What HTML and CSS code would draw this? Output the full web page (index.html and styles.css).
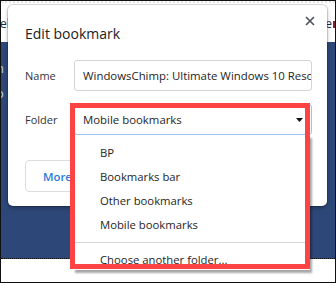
FILE: index.html
```html
<!DOCTYPE html>
<html>
<head>
<meta charset="utf-8">
<title>Edit bookmark</title>
<link rel="stylesheet" href="styles.css">
</head>
<body>
<div class="frame">
  <div class="page">
    <div class="page-top">
      <span class="frag-l">el</span>
      <span class="frag-r">e<i class="mark"></i></span>
    </div>
    <div class="page-band">
      <span class="glyph">n</span>
      <span class="glyph">o</span>
    </div>
    <div class="page-bottom"></div>
  </div>

  <section class="dialog">
    <header class="dlg-head">
      <h1 class="dlg-title">Edit bookmark</h1>
      <button class="close" aria-label="Close">
        <svg width="10" height="10" viewBox="0 0 10 10"><path d="M1 1L9 9M9 1L1 9" stroke="#4b4f5c" stroke-width="1.6" fill="none"/></svg>
      </button>
    </header>
    <div class="form">
      <span class="label">Name</span>
      <div class="field input">WindowsChimp: Ultimate Windows 10 Resources</div>
      <span class="label">Folder</span>
      <div class="field select">
        <span>Mobile bookmarks</span>
        <svg class="arrow" width="7" height="4" viewBox="0 0 7 4"><path d="M0 0H7L3.5 4Z" fill="#111"/></svg>
      </div>
    </div>
    <div class="actions">
      <button class="btn-more">More…</button>
    </div>
  </section>

  <ul class="popup">
    <li>BP</li>
    <li>Bookmarks bar</li>
    <li>Other bookmarks</li>
    <li>Mobile bookmarks</li>
    <li class="sep"></li>
    <li>Choose another folder...</li>
  </ul>

  <div class="annot"></div>
</div>
</body>
</html>
```

FILE: styles.css
```css
* { box-sizing: border-box; margin: 0; padding: 0; }
html, body { width: 336px; height: 283px; overflow: hidden; background: #fff; }
body { font-family: "Open Sans", "Noto Sans", sans-serif; color: #222; }

.frame {
  position: relative;
  width: 336px;
  height: 283px;
  border: 1px solid #111;
  overflow: hidden;
}

/* page behind the dialog */
.page { display: flex; flex-direction: column; height: 100%; }
.page-top {
  height: 41px;
  flex: 0 0 41px;
  display: flex;
  justify-content: space-between;
  align-items: flex-start;
  padding-top: 14px;
  border-top: 2px dotted #e6e6e6;
  font-size: 12px;
  line-height: 14px;
  color: #1d2c48;
}
.frag-l { margin-left: -1px; }
.frag-r { display: flex; align-items: center; margin-right: -1px; }
.mark { display: inline-block; width: 3px; height: 7px; background: #7a2436; margin-left: 1px; }
.page-band {
  flex: 0 0 217px;
  background: #2d4878;
  border-bottom: 1px dotted #111;
  display: flex;
  flex-direction: column;
  padding-top: 14px;
  font-size: 13px;
  line-height: 25px;
  color: #c6d1e4;
}
.glyph { margin-left: -5px; }
.page-bottom { flex: 1; background: #fff; }

/* dialog */
.dialog {
  position: absolute;
  left: 7px;
  top: 4px;
  width: 319px;
  height: 201px;
  background: #fff;
  border-radius: 5px;
  box-shadow: 0 0 0 1px rgba(0,0,0,0.12), 0 2px 4px rgba(0,0,0,0.3);
  padding: 11px 15px 14px 17px;
  display: flex;
  flex-direction: column;
}
.dlg-head {
  display: flex;
  justify-content: space-between;
  align-items: flex-start;
  height: 28px;
}
.dlg-title {
  margin-top: 8px;
  font-size: 14px;
  line-height: 20px;
  font-weight: 400;
  color: #202124;
}
.close {
  width: 10px;
  height: 10px;
  border: 0;
  background: none;
  margin-right: -3px;
  display: flex;
}

.form {
  margin-top: 16px;
  display: grid;
  grid-template-columns: 49px 238px;
  grid-auto-rows: 31px;
  row-gap: 13px;
  align-items: center;
}
.label { font-size: 11px; color: #333; }
.field {
  height: 31px;
  border: 1px solid #d4d4d4;
  border-radius: 3px;
  font-size: 11.4px;
  color: #1e1e1e;
  padding: 0 8px;
  display: flex;
  align-items: center;
  white-space: nowrap;
  overflow: hidden;
}
.select {
  border-color: #9fc2ee;
  justify-content: space-between;
  padding-right: 8px;
}

.actions { margin-top: 25px; display: flex; }
.btn-more {
  height: 32px;
  padding: 0 17px;
  border: 1px solid #dadce0;
  border-radius: 4px;
  background: #fff;
  font-family: "Open Sans", "Noto Sans", sans-serif;
  font-size: 11.4px;
  font-weight: 600;
  color: #2a7ad8;
}

/* native select popup */
.popup {
  position: absolute;
  left: 72px;
  top: 134px;
  width: 237px;
  height: 135px;
  background: #fff;
  box-shadow: 2px 3px 2px rgba(0,0,0,0.35);
  list-style: none;
  padding-top: 6px;
  font-size: 11.3px;
  color: #1e1e1e;
  overflow: hidden;
}
.popup li { height: 24px; line-height: 24px; padding-left: 27px; white-space: nowrap; }
.popup li.sep { height: 1px; background: #d6d6d6; margin: 5px 2px; padding: 0; }

/* red annotation */
.annot {
  position: absolute;
  left: 69px;
  top: 102px;
  width: 240px;
  height: 166px;
  border: 5px solid #fd4343;
}
```
